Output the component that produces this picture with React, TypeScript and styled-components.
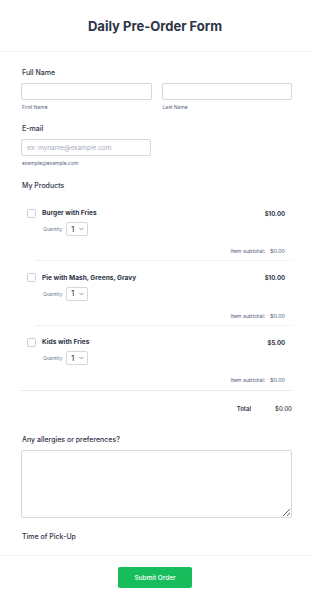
import React, { FC } from 'react';
import styled, { createGlobalStyle } from 'styled-components';

const GlobalStyle = createGlobalStyle`
  html, body {
    margin: 0;
    padding: 0;
    background: #ffffff;
    font-family: Inter, "Liberation Sans", sans-serif;
    color: #2c3345;
  }
  * { box-sizing: border-box; }
`;

const Page = styled.div`
  width: 310px;
  min-height: 606px;
  display: flex;
  flex-direction: column;
`;

const Header = styled.div`
  height: 52px;
  border-bottom: 1px solid #f1f2f4;
  display: flex;
  align-items: center;
  justify-content: center;
`;

const Title = styled.h1`
  margin: 0;
  font-size: 13px;
  font-weight: 700;
  color: #2c3345;
`;

const Body = styled.div`
  padding: 16px 18px 0 21px;
  display: flex;
  flex-direction: column;
  gap: 13px;
`;

const Field = styled.div<{ $mt?: number }>`
  display: flex;
  flex-direction: column;
  margin-top: ${p => p.$mt || 0}px;
`;

const Label = styled.label`
  font-size: 7px;
  line-height: 10px;
  font-weight: 500;
  color: #2c3345;
  padding-left: 1px;
  margin-bottom: 5px;
`;

const Row = styled.div`
  display: flex;
  gap: 10px;
`;

const Col = styled.div<{ $w?: number }>`
  display: flex;
  flex-direction: column;
  width: ${p => (p.$w ? `${p.$w}px` : 'auto')};
  flex: ${p => (p.$w ? 'none' : 1)};
`;

const Input = styled.input`
  height: 17px;
  width: 100%;
  border: 1px solid #d3d8e2;
  border-radius: 2px;
  padding: 0 5px;
  font-family: inherit;
  font-size: 6.5px;
  color: #2c3345;
  outline: none;
  &::placeholder { color: #a6adbb; }
`;

const Sub = styled.span`
  font-size: 5px;
  line-height: 8px;
  margin-top: 3px;
  padding-left: 1px;
  color: #57647e;
`;

const Products = styled.div`
  display: flex;
  flex-direction: column;
  margin-top: 12px;
  border-bottom: 1px solid #e6e9ee;
`;

const Item = styled.div`
  display: flex;
  flex-direction: column;
  padding: 0 7px 0 6px;
  &:not(:first-child) { padding-top: 11.5px; }
`;

const ItemHead = styled.div`
  display: flex;
  align-items: center;
  height: 10px;
`;

const Check = styled.span`
  width: 9px;
  height: 9px;
  border: 1px solid #c8ced9;
  border-radius: 1.5px;
  margin-right: 6px;
  background: #fff;
`;

const Name = styled.span`
  flex: 1;
  font-size: 6.6px;
  font-weight: 700;
  color: #2c3345;
`;

const Price = styled.span`
  font-size: 6px;
  font-weight: 700;
  color: #2c3345;
`;

const QtyRow = styled.div`
  display: flex;
  align-items: center;
  margin-top: 4px;
  padding-left: 16px;
  gap: 4px;
`;

const QtyLabel = styled.span`
  font-size: 4.8px;
  color: #6f7a90;
`;

const Select = styled.div`
  width: 22px;
  height: 14px;
  border: 1px solid #d3d8e2;
  border-radius: 2px;
  display: flex;
  align-items: center;
  justify-content: space-between;
  padding: 0 3px 0 4px;
  font-size: 7px;
  font-weight: 500;
  color: #2c3345;
`;

const Subtotal = styled.div`
  margin-top: 11px;
  display: flex;
  justify-content: flex-end;
  gap: 5px;
  font-size: 5.4px;
  line-height: 8px;
  color: #57647e;
`;

const Divider = styled.div`
  margin: 5px -7px 0 8px;
  border-top: 1px dotted #e3e6ec;
`;

const LastGap = styled.div`
  height: 6px;
`;

const TotalRow = styled.div`
  display: flex;
  justify-content: flex-end;
  margin-top: 13px;
  font-size: 6px;
  line-height: 10px;
  font-weight: 600;
  color: #2c3345;
  gap: 24px;
`;

const TotalValue = styled.span`
  font-weight: 500;
`;

const TextArea = styled.textarea`
  height: 68px;
  width: 100%;
  border: 1px solid #d3d8e2;
  border-radius: 2px;
  resize: vertical;
  font-family: inherit;
  outline: none;
`;

const Footer = styled.div`
  margin-top: 8px;
  border-top: 1px solid #f1f2f4;
  display: flex;
  justify-content: center;
  padding: 11px 0 16px;
`;

const Button = styled.button`
  width: 74px;
  height: 21px;
  border: none;
  border-radius: 2px;
  background: #18bd5b;
  color: #fff;
  font-family: inherit;
  font-size: 6.5px;
  font-weight: 500;
`;

const Chevron = () => (
  <svg width="5" height="4" viewBox="0 0 10 6" fill="none">
    <path d="M1 1l4 4 4-4" stroke="#6f7a90" strokeWidth="1.4" strokeLinecap="round" strokeLinejoin="round" />
  </svg>
);

const products = [
  { name: 'Burger with Fries', price: '$10.00' },
  { name: 'Pie with Mash, Greens, Gravy', price: '$10.00' },
  { name: 'Kids with Fries', price: '$5.00' },
];

const App: FC = () => (
  <Page>
    <GlobalStyle />
    <Header>
      <Title>Daily Pre-Order Form</Title>
    </Header>
    <Body>
      <Field>
        <Label>Full Name</Label>
        <Row>
          <Col>
            <Input />
            <Sub>First Name</Sub>
          </Col>
          <Col>
            <Input />
            <Sub>Last Name</Sub>
          </Col>
        </Row>
      </Field>
      <Field>
        <Label>E-mail</Label>
        <Col $w={130}>
          <Input placeholder="ex: myname@example.com" />
          <Sub>example@example.com</Sub>
        </Col>
      </Field>
      <Field $mt={1}>
        <Label>My Products</Label>
        <Products>
          {products.map((p, i) => (
            <Item key={p.name}>
              <ItemHead>
                <Check />
                <Name>{p.name}</Name>
                <Price>{p.price}</Price>
              </ItemHead>
              <QtyRow>
                <QtyLabel>Quantity</QtyLabel>
                <Select>
                  1 <Chevron />
                </Select>
              </QtyRow>
              <Subtotal>
                <span>Item subtotal:</span>
                <span>$0.00</span>
              </Subtotal>
              {i < products.length - 1 ? <Divider /> : <LastGap />}
            </Item>
          ))}
        </Products>
        <TotalRow>
          <span>Total</span>
          <TotalValue>$0.00</TotalValue>
        </TotalRow>
      </Field>
      <Field $mt={8}>
        <Label>Any allergies or preferences?</Label>
        <TextArea />
      </Field>
      <Field $mt={1}>
        <Label>Time of Pick-Up</Label>
      </Field>
    </Body>
    <Footer>
      <Button>Submit Order</Button>
    </Footer>
  </Page>
);

export default App;
